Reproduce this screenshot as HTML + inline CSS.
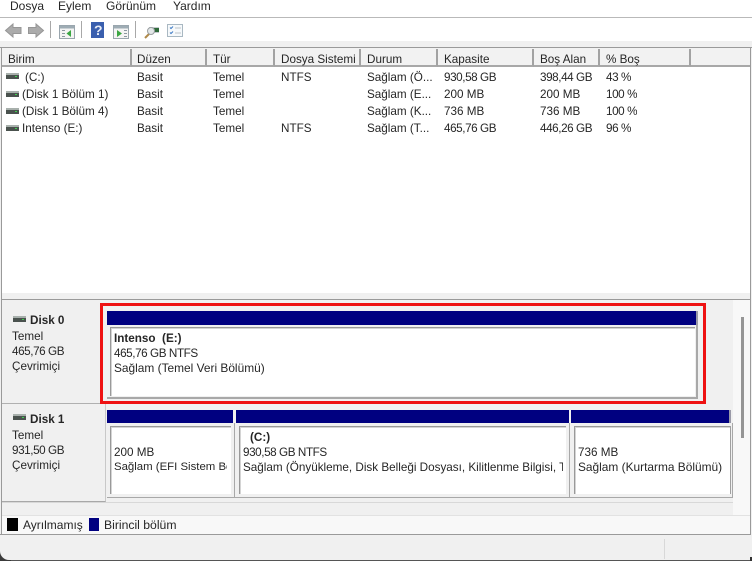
<!DOCTYPE html>
<html lang="tr"><head><meta charset="utf-8"><style>
html,body{margin:0;padding:0}
body{width:752px;height:561px;overflow:hidden;position:relative;background:#f0f0f0;font:12px/15px "Liberation Sans",sans-serif;color:#262626}
.a{position:absolute}
.t{position:absolute;white-space:nowrap;font-size:11.7px;line-height:15px;overflow:hidden}
.g{letter-spacing:-.42px}
.b{font-weight:bold}
.h{position:absolute;top:49px;height:18px;border-right:2px solid #a2a2a2;border-bottom:2px solid #a8a8a8;background:#f2f2f2;box-sizing:border-box}
.n{position:absolute;background:#000080;border-right:2px solid #9a9aa8}
.p{position:absolute;box-sizing:border-box;background:#fff;border-top:1px solid #999;border-left:1px solid #999;box-shadow:inset 1px 1px 0 #d4d4d4}
.l{position:absolute;background:#a8a8a8}
</style></head><body>
<div class="a" style="left:0;top:0;width:752px;height:41px;background:#fff"></div>
<div class="a" style="left:0;top:17px;width:752px;height:1px;background:#b9b9b9"></div>
<span class="t" style="left:10px;top:-1px;font-size:12px">Dosya</span>
<span class="t" style="left:58px;top:-1px;font-size:12px">Eylem</span>
<span class="t" style="left:106px;top:-1px;font-size:12px">Görünüm</span>
<span class="t" style="left:173px;top:-1px;font-size:12px">Yardım</span>

<svg class="a" style="left:0;top:18px" width="200" height="24" viewBox="0 0 200 24">
<path d="M5.500 12.500 L13 6 V9.500 H21 V15.500 H13 V19 Z" fill="#ababab" stroke="#969696"/>
<path d="M43.500 12.500 L36 6 V9.500 H28.500 V15.500 H36 V19 Z" fill="#ababab" stroke="#969696"/>
<rect x="50" y="3" width="1" height="17" fill="#a8a8a8"/>
<rect x="59.500" y="7.500" width="15" height="13" fill="#f4f4f4" stroke="#9aa6ae"/><rect x="60" y="8" width="14" height="2.500" fill="#9eacb4"/>
<path d="M71 12 V19 L66.500 15.500 Z" fill="#3aa642"/><path d="M62 12.500H65M62 15.500H65M62 18.500H65" stroke="#8a979f"/>
<rect x="81" y="3" width="1" height="17" fill="#a8a8a8"/>
<rect x="91" y="4" width="13" height="16" fill="#3a5fae"/>
<rect x="113.500" y="7.500" width="15" height="13" fill="#f4f4f4" stroke="#9aa6ae"/><rect x="114" y="8" width="14" height="2.500" fill="#9eacb4"/>
<path d="M117 12 V19 L122 15.500 Z" fill="#3aa642"/><path d="M124 12.500H127M124 15.500H127M124 18.500H127" stroke="#8a979f"/>
<rect x="135" y="3" width="1" height="17" fill="#a8a8a8"/>
<rect x="149" y="9" width="10" height="6" fill="#c4cacc"/><rect x="154" y="10" width="5" height="4" fill="#2f6a3a"/>
<path d="M145 20 L150 15" stroke="#b08a4a" stroke-width="2"/>
<circle cx="151" cy="13" r="3.500" fill="#e3e7e8" stroke="#9a9fa2"/>
<rect x="167.500" y="6.500" width="15" height="12" fill="#f6f9fb" stroke="#a9b8c2"/>
<path d="M170 9.500 l1 1 2-2 M170 14.500 l1 1 2-2" stroke="#3b78c4" fill="none"/>
<path d="M175 10H181M175 15H181" stroke="#bcc4ca"/>
</svg>
<span class="t b" style="left:94px;top:21px;font-size:14px;line-height:18px;color:#e8ecf6">?</span>

<!-- list -->
<div class="a" style="left:0;top:47px;width:752px;height:1px;background:#9a9a9a"></div>
<div class="a" style="left:1px;top:48px;width:1px;height:251px;background:#9a9a9a"></div>
<div class="a" style="left:2px;top:48px;width:748px;height:245px;background:#fff"></div>
<div class="a" style="left:750px;top:47px;width:1px;height:252px;background:#9a9a9a"></div>
<div class="a" style="left:2px;top:48px;width:748px;height:19px;background:#f2f2f2;border-bottom:0"></div>
<div class="h" style="left:2px;width:130px"></div>
<div class="h" style="left:132px;width:75px"></div>
<div class="h" style="left:207px;width:68px"></div>
<div class="h" style="left:275px;width:86px"></div>
<div class="h" style="left:361px;width:77px"></div>
<div class="h" style="left:438px;width:96px"></div>
<div class="h" style="left:534px;width:66px"></div>
<div class="h" style="left:600px;width:91px"></div>
<div class="h" style="left:691px;width:59px;border-right:0"></div>
<span class="t" style="left:8px;top:52px">Birim</span>
<span class="t" style="left:137px;top:52px">Düzen</span>
<span class="t" style="left:213px;top:52px">Tür</span>
<span class="t" style="left:281px;top:52px">Dosya Sistemi</span>
<span class="t" style="left:367px;top:52px">Durum</span>
<span class="t" style="left:444px;top:52px">Kapasite</span>
<span class="t" style="left:540px;top:52px">Boş Alan</span>
<span class="t" style="left:606px;top:52px">% Boş</span>

<svg class="a" style="left:0;top:68px" width="24" height="68" viewBox="0 0 24 68">
<g><rect x="6" y="5" width="13" height="2" fill="#a8b0ac"/><rect x="6" y="7" width="13" height="4" fill="#4a524e"/><rect x="15" y="8" width="2" height="1" fill="#3fd04f"/></g>
<g transform="translate(0 18)"><rect x="6" y="5" width="13" height="2" fill="#a8b0ac"/><rect x="6" y="7" width="13" height="4" fill="#4a524e"/><rect x="15" y="8" width="2" height="1" fill="#3fd04f"/></g>
<g transform="translate(0 35)"><rect x="6" y="5" width="13" height="2" fill="#a8b0ac"/><rect x="6" y="7" width="13" height="4" fill="#4a524e"/><rect x="15" y="8" width="2" height="1" fill="#3fd04f"/></g>
<g transform="translate(0 52)"><rect x="6" y="5" width="13" height="2" fill="#a8b0ac"/><rect x="6" y="7" width="13" height="4" fill="#4a524e"/><rect x="15" y="8" width="2" height="1" fill="#3fd04f"/></g>
</svg>

<span class="t" style="left:25px;top:70px">(C:)</span><span class="t" style="left:137px;top:70px">Basit</span><span class="t" style="left:213px;top:70px">Temel</span><span class="t" style="left:281px;top:70px">NTFS</span><span class="t" style="left:367px;top:70px">Sağlam (Ö...</span><span class="t g" style="left:444px;top:70px">930,58 GB</span><span class="t g" style="left:540px;top:70px">398,44 GB</span><span class="t g" style="left:606px;top:70px">43 %</span>
<span class="t" style="left:22px;top:87px">(Disk 1 Bölüm 1)</span><span class="t" style="left:137px;top:87px">Basit</span><span class="t" style="left:213px;top:87px">Temel</span><span class="t" style="left:367px;top:87px">Sağlam (E...</span><span class="t" style="left:444px;top:87px">200 MB</span><span class="t" style="left:540px;top:87px">200 MB</span><span class="t g" style="left:606px;top:87px">100 %</span>
<span class="t" style="left:22px;top:104px">(Disk 1 Bölüm 4)</span><span class="t" style="left:137px;top:104px">Basit</span><span class="t" style="left:213px;top:104px">Temel</span><span class="t" style="left:367px;top:104px">Sağlam (K...</span><span class="t" style="left:444px;top:104px">736 MB</span><span class="t" style="left:540px;top:104px">736 MB</span><span class="t g" style="left:606px;top:104px">100 %</span>
<span class="t" style="left:22px;top:121px">Intenso (E:)</span><span class="t" style="left:137px;top:121px">Basit</span><span class="t" style="left:213px;top:121px">Temel</span><span class="t" style="left:281px;top:121px">NTFS</span><span class="t" style="left:367px;top:121px">Sağlam (T...</span><span class="t g" style="left:444px;top:121px">465,76 GB</span><span class="t g" style="left:540px;top:121px">446,26 GB</span><span class="t g" style="left:606px;top:121px">96 %</span>

<!-- lower -->
<div class="a" style="left:2px;top:293px;width:748px;height:6px;background:#f0f0f0"></div>
<div class="a" style="left:1px;top:299px;width:750px;height:1px;background:#9a9a9a"></div>
<div class="a" style="left:1px;top:299px;width:1px;height:236px;background:#9a9a9a"></div>
<div class="a" style="left:750px;top:299px;width:1px;height:236px;background:#9a9a9a"></div>
<div class="a" style="left:733px;top:300px;width:17px;height:215px;background:#f8f8f8"></div>
<div class="a" style="left:741px;top:317px;width:3px;height:121px;background:#959595"></div>

<div class="a" style="left:2px;top:403px;width:103px;height:1px;background:#b0b0b0"></div>
<div class="a" style="left:2px;top:404px;width:104px;height:98px;background:#f0f0f0;border-bottom:1px solid #a8a8a8;border-right:1px solid #c8c8c8;box-sizing:border-box"></div>
<div class="a" style="left:2px;top:502px;width:731px;height:13px;background:#f0f0f0;border-top:1px solid #d8d8d8;box-sizing:border-box"></div>

<svg class="a" style="left:8px;top:313px" width="20" height="14"><rect x="5" y="3" width="13" height="2" fill="#a8b0ac"/><rect x="5" y="5" width="13" height="4" fill="#4a524e"/><rect x="14" y="6" width="2" height="1" fill="#3fd04f"/></svg>
<svg class="a" style="left:8px;top:411px" width="20" height="14"><rect x="5" y="3" width="13" height="2" fill="#a8b0ac"/><rect x="5" y="5" width="13" height="4" fill="#4a524e"/><rect x="14" y="6" width="2" height="1" fill="#3fd04f"/></svg>

<span class="t b" style="left:30px;top:313px">Disk 0</span>
<span class="t" style="left:12px;top:329px">Temel</span>
<span class="t g" style="left:12px;top:344px">465,76 GB</span>
<span class="t" style="left:12px;top:359px">Çevrimiçi</span>
<span class="t b" style="left:30px;top:412px">Disk 1</span>
<span class="t" style="left:12px;top:428px">Temel</span>
<span class="t g" style="left:12px;top:443px">931,50 GB</span>
<span class="t" style="left:12px;top:458px">Çevrimiçi</span>

<!-- disk 0 -->
<div class="a" style="left:100px;top:303px;width:606px;height:101px;box-sizing:border-box;border:3px solid #ee1111"></div>
<div class="n" style="left:107px;top:311px;width:589px;height:14px"></div>
<div class="a" style="left:107px;top:325px;width:591px;height:74px;box-sizing:border-box;border-right:2px solid #a8a8a8;border-bottom:2px solid #a8a8a8;background:#f0f0f0"></div>
<div class="p" style="left:110px;top:327px;width:585px;height:69px"></div>
<span class="t b" style="left:114px;top:331px">Intenso&nbsp; (E:)</span>
<span class="t g" style="left:114px;top:346px">465,76 GB NTFS</span>
<span class="t" style="left:114px;top:361px;font-size:11.9px">Sağlam (Temel Veri Bölümü)</span>

<!-- disk 1 -->
<div class="n" style="left:107px;top:410px;width:126px;height:13px;border-right:0"></div>
<div class="n" style="left:236px;top:410px;width:333px;height:13px;border-right:0"></div>
<div class="n" style="left:571px;top:410px;width:158px;height:13px"></div>
<div class="l" style="left:107px;top:497px;width:626px;height:1px"></div>
<div class="l" style="left:234px;top:423px;width:1px;height:74px"></div>
<div class="l" style="left:569px;top:423px;width:1px;height:74px"></div>
<div class="l" style="left:732px;top:423px;width:1px;height:75px"></div>
<div class="p" style="left:110px;top:426px;width:121px;height:68px"></div>
<div class="p" style="left:239px;top:426px;width:327px;height:68px"></div>
<div class="p" style="left:574px;top:426px;width:156px;height:68px"></div>
<div class="a" style="left:730px;top:426px;width:1px;height:68px;background:#a0a0a0"></div>
<span class="t" style="left:114px;top:445px">200 MB</span>
<span class="t" style="left:114px;top:460px;width:113px;font-size:11.4px">Sağlam (EFI Sistem Bölümü)</span>
<span class="t b" style="left:250px;top:430px">(C:)</span>
<span class="t g" style="left:243px;top:445px">930,58 GB NTFS</span>
<span class="t" style="left:243px;top:460px;width:320px">Sağlam (Önyükleme, Disk Belleği Dosyası, Kilitlenme Bilgisi, Temel)</span>
<span class="t" style="left:578px;top:445px">736 MB</span>
<span class="t" style="left:578px;top:460px;font-size:11.9px">Sağlam (Kurtarma Bölümü)</span>

<!-- legend -->
<div class="a" style="left:2px;top:515px;width:748px;height:19px;background:#f8f8f8;border-top:1px solid #e2e2e2;box-sizing:border-box"></div>
<div class="a" style="left:0;top:534px;width:751px;height:1px;background:#9a9a9a"></div>
<div class="a" style="left:7px;top:518px;width:11px;height:13px;background:#000"></div>
<div class="a" style="left:89px;top:518px;width:10px;height:13px;background:#000080"></div>
<span class="t" style="left:23px;top:518px;font-size:12px">Ayrılmamış</span>
<span class="t" style="left:104px;top:518px;font-size:12.2px">Birincil bölüm</span>

<!-- status -->
<div class="a" style="left:664px;top:539px;width:1px;height:20px;background:#d8d8d8"></div>
<div class="a" style="left:0;top:560px;width:752px;height:1px;background:#555"></div>
<div class="a" style="left:0;top:550px;width:11px;height:11px;background:#3a3a3a"></div>
<div class="a" style="left:0;top:549px;width:12px;height:11px;background:#f0f0f0;border-bottom-left-radius:9px"></div>
<div class="a" style="left:750px;top:557px;width:2px;height:4px;background:#333"></div>
</body></html>
